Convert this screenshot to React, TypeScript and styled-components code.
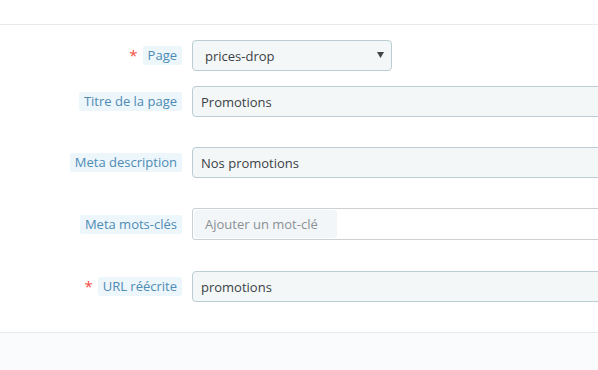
import React from "react";
import styled, { createGlobalStyle } from "styled-components";

const Global = createGlobalStyle`
  html, body { margin: 0; padding: 0; background: #fff; }
  body { font-family: "Open Sans", "Noto Sans", sans-serif; font-size: 13px; overflow: hidden; }
  #root { width: 598px; height: 370px; overflow: hidden; }
`;

const Page = styled.div`
  width: 598px;
  height: 370px;
  display: flex;
  flex-direction: column;
  overflow: hidden;
`;

const TopBar = styled.div`
  height: 24px;
  border-bottom: 1px solid #e8eaeb;
  flex-shrink: 0;
`;

const Form = styled.div`
  padding-top: 15px;
  display: flex;
  flex-direction: column;
  flex-shrink: 0;
`;

const Row = styled.div<{ $mb: number }>`
  display: flex;
  align-items: center;
  margin-bottom: ${(p) => p.$mb}px;
`;

const LabelCol = styled.div`
  width: 182px;
  flex-shrink: 0;
  display: flex;
  justify-content: flex-end;
  align-items: center;
  padding-right: 10px;
  box-sizing: content-box;
`;

const Star = styled.span`
  color: #f54c3e;
  font-size: 15px;
  margin-right: 5px;
  position: relative;
  top: -1px;
`;

const Label = styled.span`
  background: #edf6fb;
  color: #4e8bb5;
  border-radius: 2px;
  padding: 0 5px;
  height: 19px;
  line-height: 19px;
  font-size: 13px;
  white-space: nowrap;
`;

const Field = styled.div<{ $w?: number }>`
  width: ${(p) => (p.$w ? `${p.$w}px` : "440px")};
  flex-shrink: 0;
`;

const Select = styled.div`
  height: 31px;
  box-sizing: border-box;
  border: 1px solid #bbcdd2;
  border-radius: 4px;
  background: #f4f7f8;
  color: #3b3f46;
  display: flex;
  align-items: center;
  justify-content: space-between;
  padding: 0 7px 0 12px;
`;

const Arrow = styled.svg`
  width: 7px;
  height: 6px;
  margin-top: -2px;
`;

const Input = styled.div`
  height: 31px;
  box-sizing: border-box;
  border: 1px solid #bbcdd2;
  border-radius: 4px 0 0 4px;
  background: #f4f7f8;
  color: #3b3f46;
  display: flex;
  align-items: center;
  padding: 0 8px;
  white-space: nowrap;
`;

const TagBox = styled.div`
  height: 32px;
  box-sizing: border-box;
  border: 1px solid #cdd0d2;
  border-radius: 3px 0 0 3px;
  background: #fff;
  display: flex;
  align-items: center;
  padding: 2px 1px;
`;

const TagInput = styled.div`
  height: 28px;
  width: 143px;
  box-sizing: border-box;
  background: #f3f6f8;
  border-radius: 3px;
  color: #8a9094;
  display: flex;
  align-items: center;
  padding-left: 11px;
  white-space: nowrap;
`;

const Footer = styled.div`
  flex: 1;
  border-top: 1px solid #e8eaeb;
  background: #fafbfc;
`;

type RowProps = { label: string; required?: boolean; mb: number; children: React.ReactNode };

const FormRow = ({ label, required, mb, children }: RowProps) => (
  <Row $mb={mb}>
    <LabelCol>
      {required && <Star>*</Star>}
      <Label>{label}</Label>
    </LabelCol>
    {children}
  </Row>
);

export default function App() {
  return (
    <>
      <Global />
      <Page>
        <TopBar />
        <Form>
          <FormRow label="Page" required mb={15}>
            <Field $w={200}>
              <Select>
                <span>prices-drop</span>
                <Arrow viewBox="0 0 7 6">
                  <path d="M0 0 H7 L3.5 6 Z" fill="#444" />
                </Arrow>
              </Select>
            </Field>
          </FormRow>
          <FormRow label="Titre de la page" mb={30}>
            <Field>
              <Input>Promotions</Input>
            </Field>
          </FormRow>
          <FormRow label="Meta description" mb={30}>
            <Field>
              <Input>Nos promotions</Input>
            </Field>
          </FormRow>
          <FormRow label="Meta mots-clés" mb={31}>
            <Field>
              <TagBox>
                <TagInput>Ajouter un mot-clé</TagInput>
              </TagBox>
            </Field>
          </FormRow>
          <FormRow label="URL réécrite" required mb={30}>
            <Field>
              <Input>promotions</Input>
            </Field>
          </FormRow>
        </Form>
        <Footer />
      </Page>
    </>
  );
}
